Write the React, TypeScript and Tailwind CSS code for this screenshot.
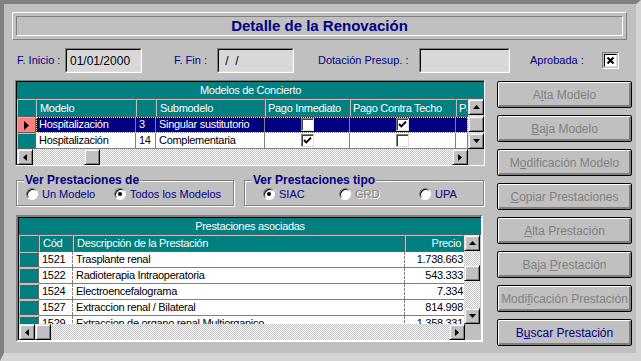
import type { ReactNode } from 'react'

type Dir = 'up' | 'down' | 'left' | 'right'

const BEVEL =
  'border border-t-[#dfdfdf] border-l-[#dfdfdf] border-r-black border-b-black bg-[#c0c0c0] shadow-[inset_1px_1px_0_#fff,inset_-1px_-1px_0_#808080]'
const DITHER = 'bg-[image:repeating-conic-gradient(#c0c0c0_0%_25%,#ffffff_0%_50%)] bg-[length:2px_2px]'
const HCELL =
  'border border-t-[#c0c0c0] border-l-[#c0c0c0] border-r-[#606060] border-b-[#606060] bg-[#008080] text-white'
const CELL = 'border-r border-b border-[#808080]'

function Arrow({ dir }: { dir: Dir }) {
  const horiz = dir === 'left' || dir === 'right'
  const pts = {
    up: '3.5,0 7,4 0,4',
    down: '0,0 7,0 3.5,4',
    left: '4,0 4,7 0,3.5',
    right: '0,0 4,3.5 0,7',
  }[dir]
  return (
    <svg width={horiz ? 4 : 7} height={horiz ? 7 : 4} viewBox={horiz ? '0 0 4 7' : '0 0 7 4'}>
      <polygon points={pts} fill="#000" />
    </svg>
  )
}

function ScrollBtn({ dir }: { dir?: Dir }) {
  return (
    <div className={`flex h-[16px] w-[16px] shrink-0 items-center justify-center ${BEVEL}`}>
      {dir && <Arrow dir={dir} />}
    </div>
  )
}

function CheckMark() {
  return (
    <svg width="9" height="9" viewBox="0 0 9 9">
      <path d="M1 4 L3.3 6.4 L8 1.6" stroke="#000" strokeWidth="2" fill="none" />
    </svg>
  )
}

function CellCheck({ checked }: { checked?: boolean }) {
  return (
    <span className="flex h-[13px] w-[13px] items-center justify-center border border-t-[#808080] border-l-[#808080] border-r-[#dfdfdf] border-b-[#dfdfdf] bg-white shadow-[inset_1px_1px_0_#404040]">
      {checked && <CheckMark />}
    </span>
  )
}

function Radio({ on }: { on?: boolean }) {
  return (
    <span className="flex h-[12px] w-[12px] shrink-0 items-center justify-center rounded-full border border-t-[#808080] border-l-[#808080] border-r-white border-b-white bg-white shadow-[inset_1px_1px_0_#000]">
      {on && <span className="h-[4px] w-[4px] rounded-full bg-black" />}
    </span>
  )
}

function Field({ w, children }: { w: string; children?: ReactNode }) {
  return (
    <div className={`${w} h-[25px] border border-t-[#808080] border-l-[#808080] border-r-white border-b-white`}>
      <div className="flex h-full items-center border border-t-black border-l-black border-r-[#dfdfdf] border-b-[#dfdfdf] bg-[#d8d8d8] pl-[3px] text-[12px] whitespace-pre text-black">
        {children}
      </div>
    </div>
  )
}

function Btn({ children, on }: { children: ReactNode; on?: boolean }) {
  return (
    <div
      className={`flex h-[27px] w-[135px] items-center justify-center rounded-[2px] border border-black bg-[#c0c0c0] text-[12px] whitespace-nowrap shadow-[inset_1px_1px_0_#fff,inset_-2px_-2px_0_#808080] ${
        on ? 'text-[#000080]' : 'text-[#808080]'
      }`}
    >
      <span>{children}</span>
    </div>
  )
}

const modelos = [
  { modelo: 'Hospitalización', n: '3', sub: 'Singular sustitutorio', pi: false, pct: true },
  { modelo: 'Hospitalización', n: '14', sub: 'Complementaria', pi: true, pct: false },
]

const prestaciones = [
  { cod: '1521', desc: 'Trasplante renal', precio: '1.738.663' },
  { cod: '1522', desc: 'Radioterapia Intraoperatoria', precio: '543.333' },
  { cod: '1524', desc: 'Electroencefalograma', precio: '7.334' },
  { cod: '1527', desc: 'Extraccion renal / Bilateral', precio: '814.998' },
  { cod: '1529', desc: 'Extraccion de organo renal Multiorganico', precio: '1.358.331' },
]

function ModelosGrid() {
  return (
    <div className="w-[470px] border border-t-[#808080] border-l-[#808080] border-r-white border-b-white">
      <div className="flex flex-col border-t border-l border-black text-[11px] tracking-[-0.3px]">
        <div className="flex h-[17px] items-center justify-center border-b border-[#606060] bg-[#008080] text-white">
          Modelos de Concierto
        </div>
        <div className="flex">
          <div className="flex w-[451px] flex-col overflow-hidden">
            <div className="flex h-[18px] leading-[16px]">
              <div className={`w-[19px] ${HCELL}`} />
              <div className={`w-[100px] pl-[3px] ${HCELL}`}>Modelo</div>
              <div className={`w-[20px] ${HCELL}`} />
              <div className={`w-[109px] pl-[3px] ${HCELL}`}>Submodelo</div>
              <div className={`w-[85px] pl-[2px] whitespace-nowrap ${HCELL}`}>Pago Inmediato</div>
              <div className={`w-[106px] pl-[2px] whitespace-nowrap ${HCELL}`}>Pago Contra Techo</div>
              <div className={`w-[12px] overflow-hidden pl-[2px] whitespace-nowrap ${HCELL}`}>Pago</div>
            </div>
            {modelos.map((m, i) => {
              const sel = i === 0
              const row = sel ? 'bg-[#000080] text-white' : 'bg-white text-black'
              return (
                <div key={i} className="relative flex h-[16px] leading-[15px]">
                  <div
                    className={`flex w-[19px] items-center justify-center ${HCELL} ${sel ? 'bg-[#ff8080]' : ''}`}
                  >
                    {sel && (
                      <svg width="5" height="9" viewBox="0 0 5 9">
                        <polygon points="0,0 5,4.5 0,9" fill="#000" />
                      </svg>
                    )}
                  </div>
                  <div className={`w-[100px] pl-[3px] ${CELL} ${row}`}>{m.modelo}</div>
                  <div className={`w-[20px] pl-[3px] ${CELL} ${row}`}>{m.n}</div>
                  <div className={`w-[109px] pl-[3px] ${CELL} ${row}`}>{m.sub}</div>
                  <div className={`flex w-[85px] items-center justify-center ${CELL} ${row}`}>
                    <CellCheck checked={m.pi} />
                  </div>
                  <div className={`flex w-[106px] items-center justify-center ${CELL} ${row}`}>
                    <CellCheck checked={m.pct} />
                  </div>
                  <div className={`w-[12px] ${CELL} ${row}`} />
                  {sel && (
                    <div className="pointer-events-none absolute top-0 left-[19px] h-[16px] w-[432px] border border-dotted border-[#ffff80]" />
                  )}
                </div>
              )
            })}
          </div>
          <div className="flex w-[16px] flex-col">
            <ScrollBtn dir="up" />
            <div className={`h-[1px] ${DITHER}`} />
            <ScrollBtn />
            <div className={`h-[1px] ${DITHER}`} />
            <ScrollBtn dir="down" />
          </div>
        </div>
        <div className="flex h-[16px]">
          <ScrollBtn dir="left" />
          <div className={`flex flex-1 ${DITHER}`}>
            <div className="ml-[51px]">
              <ScrollBtn />
            </div>
          </div>
          <ScrollBtn dir="right" />
          <div className="w-[16px] bg-[#c0c0c0]" />
        </div>
      </div>
    </div>
  )
}

function PrestacionesGrid() {
  return (
    <div className="ml-[1px] w-[467px] border-2 border-t-[#808080] border-l-[#808080] border-r-white border-b-white">
      <div className="flex flex-col border-t border-l border-black text-[11px] tracking-[-0.3px]">
        <div className="flex h-[17px] items-center justify-center border-b border-[#606060] bg-[#008080] text-white">
          Prestaciones asociadas
        </div>
        <div className="flex">
          <div className="flex h-[89px] w-[445px] flex-col overflow-hidden">
            <div className="flex h-[17px] shrink-0 leading-[15px]">
              <div className={`w-[20px] ${HCELL}`} />
              <div className={`w-[34px] pl-[3px] ${HCELL}`}>Cód</div>
              <div className={`w-[332px] pl-[3px] ${HCELL}`}>Descripción de la Prestación</div>
              <div className={`w-[59px] pr-[2px] text-right ${HCELL}`}>Precio</div>
            </div>
            {prestaciones.map((p) => (
              <div key={p.cod} className="flex h-[16px] shrink-0 flex-col">
                <div className="flex h-[15px] leading-[15px]">
                  <div className={`w-[20px] ${HCELL}`} />
                  <div className="w-[34px] border-r border-dashed border-[#808080] bg-white pl-[3px] text-black">
                    {p.cod}
                  </div>
                  <div className="w-[332px] overflow-hidden border-r border-dashed border-[#808080] bg-white pl-[3px] whitespace-nowrap text-black">
                    {p.desc}
                  </div>
                  <div className="w-[59px] bg-white pr-[1px] text-right text-black">{p.precio}</div>
                </div>
                <div className="ml-[20px] h-[1px] bg-[#808080]" />
              </div>
            ))}
          </div>
          <div className="flex h-[89px] w-[16px] flex-col">
            <ScrollBtn dir="up" />
            <div className={`h-[14px] ${DITHER}`} />
            <ScrollBtn />
            <div className={`flex-1 ${DITHER}`} />
            <ScrollBtn dir="down" />
          </div>
        </div>
        <div className="flex h-[16px]">
          <ScrollBtn dir="left" />
          <ScrollBtn />
          <div className={`flex-1 ${DITHER}`} />
          <ScrollBtn dir="right" />
          <div className="w-[16px] bg-[#c0c0c0]" />
        </div>
      </div>
    </div>
  )
}

function Group({ title, className, children }: { title: string; className: string; children: ReactNode }) {
  return (
    <fieldset
      className={`border border-[#808080] pb-[4px] shadow-[1px_1px_0_#fff,inset_1px_1px_0_#fff] ${className}`}
    >
      <legend className="ml-[7px] bg-[#c0c0c0] px-[1px] text-[12px] leading-[14px] font-bold text-[#000080]">
        {title}
      </legend>
      <div className="flex h-[14px] items-center text-[11px] text-[#000080]">{children}</div>
    </fieldset>
  )
}

export default function App() {
  return (
    <div className="h-[361px] w-[641px] overflow-hidden border-t-4 border-r-[5px] border-b-[8px] border-l-4 border-t-[#808080] border-r-[#d4d4d4] border-b-[#d4d4d4] border-l-[#808080] bg-[#c0c0c0] font-['Liberation_Sans',Arial,sans-serif]">
      <div className="mt-[8px] ml-[8px] h-[28px] w-[615px] border border-t-white border-l-white border-r-[#808080] border-b-[#808080] p-[3px]">
        <div className="flex h-full items-center justify-center border border-t-[#808080] border-l-[#808080] border-r-white border-b-white text-[15px] font-bold text-[#000080]">
          Detalle de la Renovación
        </div>
      </div>

      <div className="mt-[8px] flex h-[25px] items-center pl-[13px] text-[11px] text-[#000080]">
        <span className="w-[48px]">F. Inicio :</span>
        <Field w="w-[77px]">01/01/2000</Field>
        <span className="ml-[32px] w-[43px]">F. Fin :</span>
        <Field w="w-[77px]">{' /  /'}</Field>
        <span className="ml-[24px] w-[101px]">Dotación Presup. :</span>
        <Field w="w-[91px]" />
        <span className="ml-[20px] w-[72px]">Aprobada :</span>
        <span className="flex h-[17px] w-[17px] items-center justify-center border border-t-[#808080] border-l-[#808080] border-r-white border-b-white">
          <span className="flex h-[13px] w-[13px] items-center justify-center border border-t-black border-l-black border-r-[#dfdfdf] border-b-[#dfdfdf] bg-white">
            <svg width="7" height="7" viewBox="0 0 7 7">
              <path d="M0.5 0.5 L6.5 6.5 M6.5 0.5 L0.5 6.5" stroke="#000" strokeWidth="2" />
            </svg>
          </span>
        </span>
      </div>

      <div className="mt-[7px] flex">
        <div className="ml-[11px] flex w-[470px] flex-col">
          <ModelosGrid />
          <div className="mt-[7px] flex">
            <Group title="Ver Prestaciones de" className="ml-[1px] w-[218px]">
              <div className="ml-[9px] flex w-[88px] items-center gap-[4px]">
                <Radio />
                <span>Un Modelo</span>
              </div>
              <div className="flex items-center gap-[4px]">
                <Radio on />
                <span>Todos los Modelos</span>
              </div>
            </Group>
            <Group title="Ver Prestaciones tipo" className="ml-[10px] w-[240px]">
              <div className="ml-[18px] flex w-[76px] items-center gap-[4px]">
                <Radio on />
                <span>SIAC</span>
              </div>
              <div className="flex w-[80px] items-center gap-[4px]">
                <Radio />
                <span className="text-[#808080] [text-shadow:1px_1px_0_#fff]">GRD</span>
              </div>
              <div className="flex items-center gap-[4px]">
                <Radio />
                <span>UPA</span>
              </div>
            </Group>
          </div>
          <div className="mt-[9px]">
            <PrestacionesGrid />
          </div>
        </div>

        <div className="mt-[1px] ml-[12px] flex flex-col gap-[7px]">
          <Btn>
            A<u>l</u>ta Modelo
          </Btn>
          <Btn>
            <u>B</u>aja Modelo
          </Btn>
          <Btn>
            M<u>o</u>dificación Modelo
          </Btn>
          <Btn>
            <u>C</u>opiar Prestaciones
          </Btn>
          <Btn>
            <u>A</u>lta Prestación
          </Btn>
          <Btn>
            Baja <u>P</u>restación
          </Btn>
          <Btn>
            Modi<u>f</u>icación Prestación
          </Btn>
          <Btn on>
            B<u>u</u>scar Prestación
          </Btn>
        </div>
      </div>
    </div>
  )
}
